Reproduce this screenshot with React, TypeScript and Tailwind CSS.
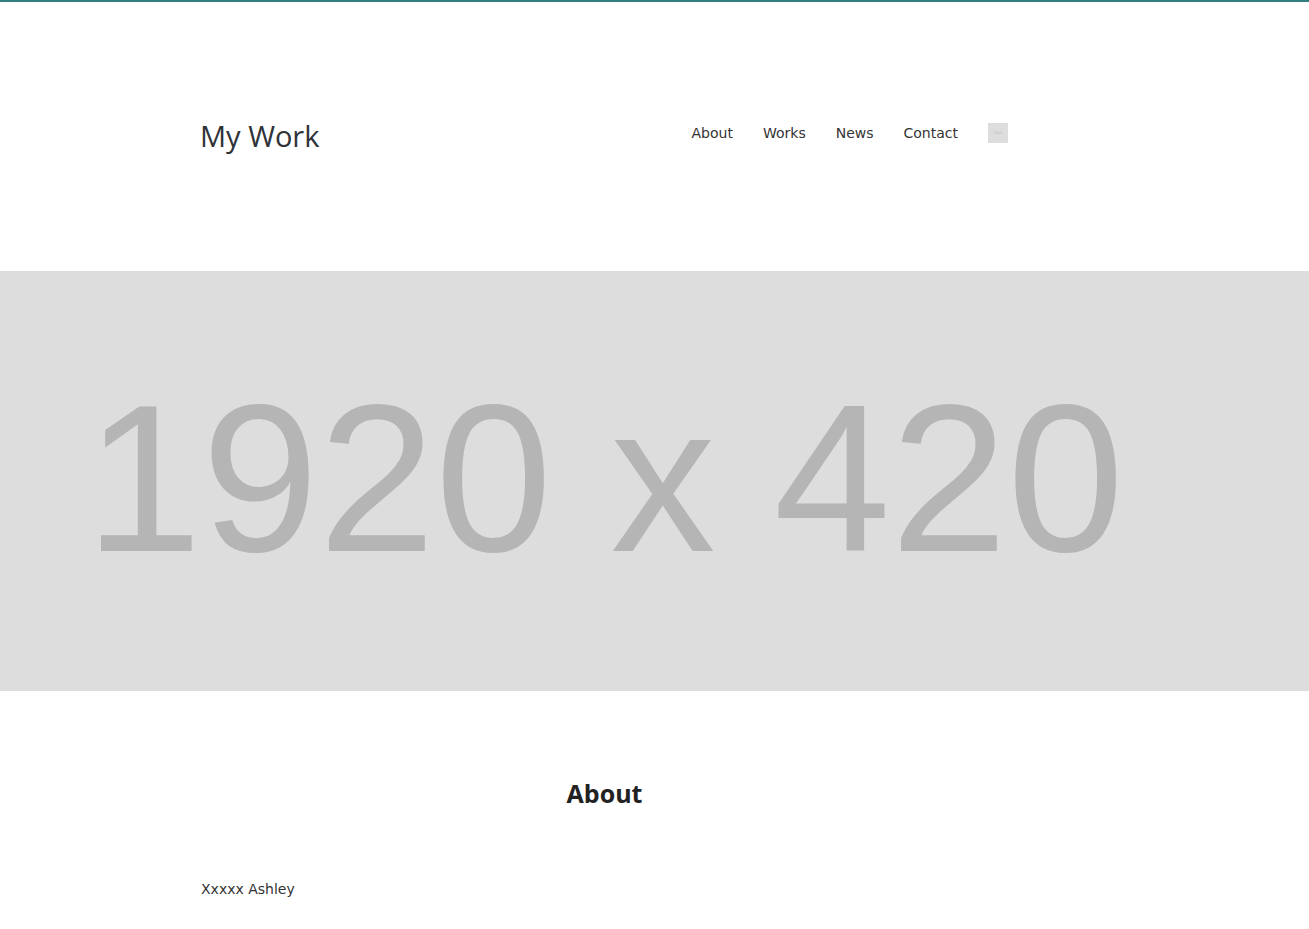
export default function App() {
  const nav = ["About", "Works", "News", "Contact"];

  return (
    <div className="min-h-screen bg-white border-t-2 border-[#337f80] text-[#333]">
      {/* Header */}
      <header className="h-[269px] flex items-center">
        <div className="ml-[201px] w-[807px] flex items-center justify-between">
          <h1 className="-ml-px -mt-[2px] text-[29px] leading-10 text-[#2f3338] font-['Open_Sans',sans-serif]">
            My Work
          </h1>
          <nav className="flex items-center gap-[30px] -mt-[7px] font-['DejaVu_Sans',sans-serif] text-[14px]">
            {nav.map((item) => (
              <a key={item} href="#" className="text-[#333] hover:text-black">
                {item}
              </a>
            ))}
            <div className="w-5 h-5 bg-[#dddddd] flex items-center justify-center overflow-hidden">
              <span className="text-[3px] leading-none text-[#bbb] font-['Liberation_Sans',sans-serif]">
                20x20
              </span>
            </div>
          </nav>
        </div>
      </header>

      {/* Banner */}
      <div className="h-[420px] bg-[#dddddd] flex items-center overflow-hidden">
        <div className="ml-[201px] w-[807px] flex justify-center -mt-[4px]">
          <span className="shrink-0 whitespace-nowrap text-[210px] leading-none text-[#b5b5b5] font-['Liberation_Sans',Arial,sans-serif]">
            1920 x 420
          </span>
        </div>
      </div>

      {/* About */}
      <section className="ml-[201px] w-[807px] pt-[80px] pb-10">
        <h2 className="text-center text-[25px] leading-[44px] font-bold text-[#222] font-['Open_Sans',sans-serif]">
          About
        </h2>
        <p className="mt-[62px] text-[14px] leading-6 font-['DejaVu_Sans',sans-serif] text-[#333]">
          Xxxxx Ashley
        </p>
      </section>
    </div>
  );
}
